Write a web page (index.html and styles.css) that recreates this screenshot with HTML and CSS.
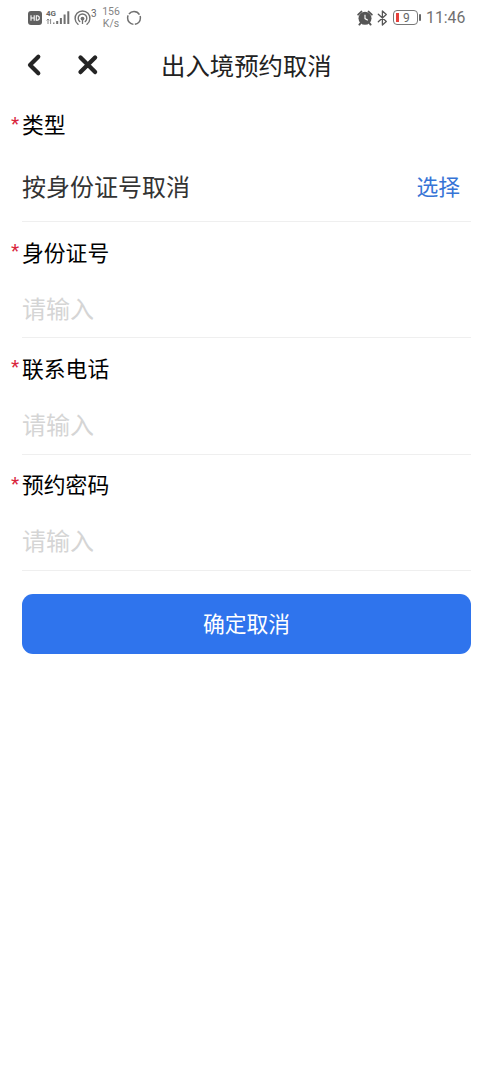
FILE: index.html
```html
<!DOCTYPE html>
<html lang="zh-CN">
<head>
<meta charset="utf-8">
<title>出入境预约取消</title>
<link rel="stylesheet" href="styles.css">
</head>
<body>
<header class="status">
  <svg class="hd" width="14" height="14" viewBox="0 0 14 14"><rect width="14" height="14" rx="3" fill="#606060"/><path d="M3 4.2v5.6M6.2 4.2v5.6M3 7h3.2M8.3 4.8v4.4h.8q2.2 0 2.2-2.2t-2.2-2.2z" fill="none" stroke="#fff" stroke-width="1.1"/></svg>
  <div class="network"><span class="gen">4G</span>
    <svg width="10" height="7" viewBox="0 0 10 7"><path d="M2 6V1M.6 2.4 2 1l1.2 1.4M4.6 1v5" fill="none" stroke="#888" stroke-width="1"/><path d="M7 4.5h1.5V6H7z" fill="#888"/></svg>
  </div>
  <svg class="signal" width="14" height="15" viewBox="0 0 14 15"><path d="M1.2 14v-3M4.9 14V8M8.6 14V4.5M12.3 14V1.2" stroke="#707070" stroke-width="2"/></svg>
  <svg class="hotspot" width="17" height="16" viewBox="0 0 17 16"><g fill="none" stroke="#707070" stroke-width="1.4" stroke-linecap="round"><path d="M4 14.2a7.4 7.4 0 1 1 9 0M5.8 11.6a4.3 4.3 0 1 1 5.4 0"/></g><circle cx="8.5" cy="8.6" r="1.9" fill="#707070"/><path d="M8.5 9v5" stroke="#707070" stroke-width="1.3"/></svg>
  <span class="count">3</span>
  <div class="speed"><span>156</span><span>K/s</span></div>
  <svg class="ring" width="16" height="16" viewBox="0 0 16 16"><circle cx="8" cy="8" r="6.4" fill="none" stroke="#707070" stroke-width="1.5" stroke-dasharray="11.9 1.5" stroke-dashoffset="3"/></svg>
  <svg class="alarm" width="16" height="16" viewBox="0 0 16 16"><circle cx="8" cy="8.3" r="6.5" fill="#555"/><path d="M1.2 4.6 4.4 1.6M14.8 4.6l-3.2-3M3.6 13l-1.2 1.6M12.4 13l1.2 1.6" stroke="#555" stroke-width="1.9" stroke-linecap="round"/><path d="M8 4.8v3.8l2.8 1.6" fill="none" stroke="#fff" stroke-width="1.1"/></svg>
  <svg class="bluetooth" width="11" height="16" viewBox="0 0 11 16"><path d="m1.3 4.3 8 7.2L5.4 15V1l3.9 3.5-8 7.2" fill="none" stroke="#555" stroke-width="1.3" stroke-linejoin="round" stroke-linecap="round"/></svg>
  <div class="battery"><span class="charge"></span><span>9</span></div>
  <span class="cap"></span>
  <time class="clock">11:46</time>
</header>
<nav class="nav">
  <svg class="back" width="16" height="24" viewBox="0 0 16 24"><path d="M12.3 3.7 4 12l8.3 8.3" fill="none" stroke="#242424" stroke-width="4.2" stroke-linecap="round" stroke-linejoin="round"/></svg>
  <svg class="close" width="22" height="22" viewBox="0 0 22 22"><path d="m3.5 3.5 14.6 14.6M18.1 3.5 3.5 18.1" stroke="#242424" stroke-width="4.3" stroke-linecap="round"/></svg>
  <h1 class="title">出入境预约取消</h1>
</nav>
<main>
  <section class="field field-type">
    <div class="label"><span class="star">*</span>类型</div>
    <div class="value"><span>按身份证号取消</span><a class="pick">选择</a></div>
  </section>
  <section class="field">
    <div class="label"><span class="star">*</span>身份证号</div>
    <div class="value hint">请输入</div>
  </section>
  <section class="field">
    <div class="label"><span class="star">*</span>联系电话</div>
    <div class="value hint">请输入</div>
  </section>
  <section class="field">
    <div class="label"><span class="star">*</span>预约密码</div>
    <div class="value hint">请输入</div>
  </section>
  <button class="submit">确定取消</button>
</main>
</body>
</html>
```
FILE: styles.css
```css
* { box-sizing: border-box; }
body {
  margin: 0;
  height: 1068px;
  background: #fff;
  font-family: Roboto, "Noto Sans CJK SC", sans-serif;
}
svg { display: block; flex: none; }

.status {
  display: flex;
  align-items: center;
  height: 35px;
  padding-left: 28px;
  color: #666;
}
.network { width: 10px; margin-left: 4px; }
.gen { display: block; font-size: 8px; line-height: 8px; font-weight: 700; }
.signal { margin-left: 0; }
.hotspot { margin-left: 4px; }
.count { width: 6px; font-size: 10px; line-height: 10px; padding-bottom: 7px; }
.speed {
  display: flex;
  flex-direction: column;
  align-items: center;
  width: 20px;
  margin-left: 4px;
  font-size: 10.5px;
  line-height: 12px;
  color: #858585;
}
.ring { margin-left: 5px; }
.alarm { margin-left: 215px; }
.bluetooth { margin-left: 4px; }
.battery {
  display: flex;
  align-items: center;
  gap: 4px;
  width: 25px;
  height: 15px;
  margin-left: 5px;
  padding-left: 2px;
  border: 1.5px solid #777;
  border-radius: 4px;
  font-size: 12px;
  line-height: 12px;
}
.charge { width: 3px; height: 9px; background: #e5413c; }
.cap { width: 2px; height: 7px; margin-left: 1px; border-radius: 1px; background: #666; }
.clock { margin-left: 5px; font-size: 15.8px; line-height: 18px; color: #707070; }

.nav {
  display: flex;
  align-items: center;
  height: 62px;
  padding: 0 0 3px 26px;
}
.close { margin-left: 35px; }
.title {
  margin: 5px 0 0 62px;
  font-size: 24.4px;
  line-height: 36px;
  font-weight: 400;
  color: #222;
}

.field {
  display: flex;
  flex-direction: column;
  height: 116.4px;
}
.field-type { height: 125px; }
.label {
  display: flex;
  align-items: center;
  height: 61px;
  padding: 0 0 3px 11px;
  font-size: 21.8px;
  color: #000;
}
.field-type .label { height: 56px; }
.star { width: 11px; font-size: 19px; line-height: 20px; color: #d9263c; }
.value {
  display: flex;
  flex: 1;
  align-items: center;
  justify-content: space-between;
  margin: 0 22px;
  padding: 0 11px 4px 0;
  border-bottom: 1px solid #efefef;
  font-size: 24px;
  color: #333;
}
.value.hint { padding-bottom: 6px; color: #d5d5d5; }
.pick { font-size: 21.8px; color: #3674d6; }

.submit {
  display: block;
  width: 449px;
  height: 60px;
  margin: 22.4px 0 0 22px;
  padding: 0 0 2px;
  border: 0;
  border-radius: 11px;
  background: #2f74ed;
  color: #fff;
  font: inherit;
  font-size: 21.8px;
}
```
